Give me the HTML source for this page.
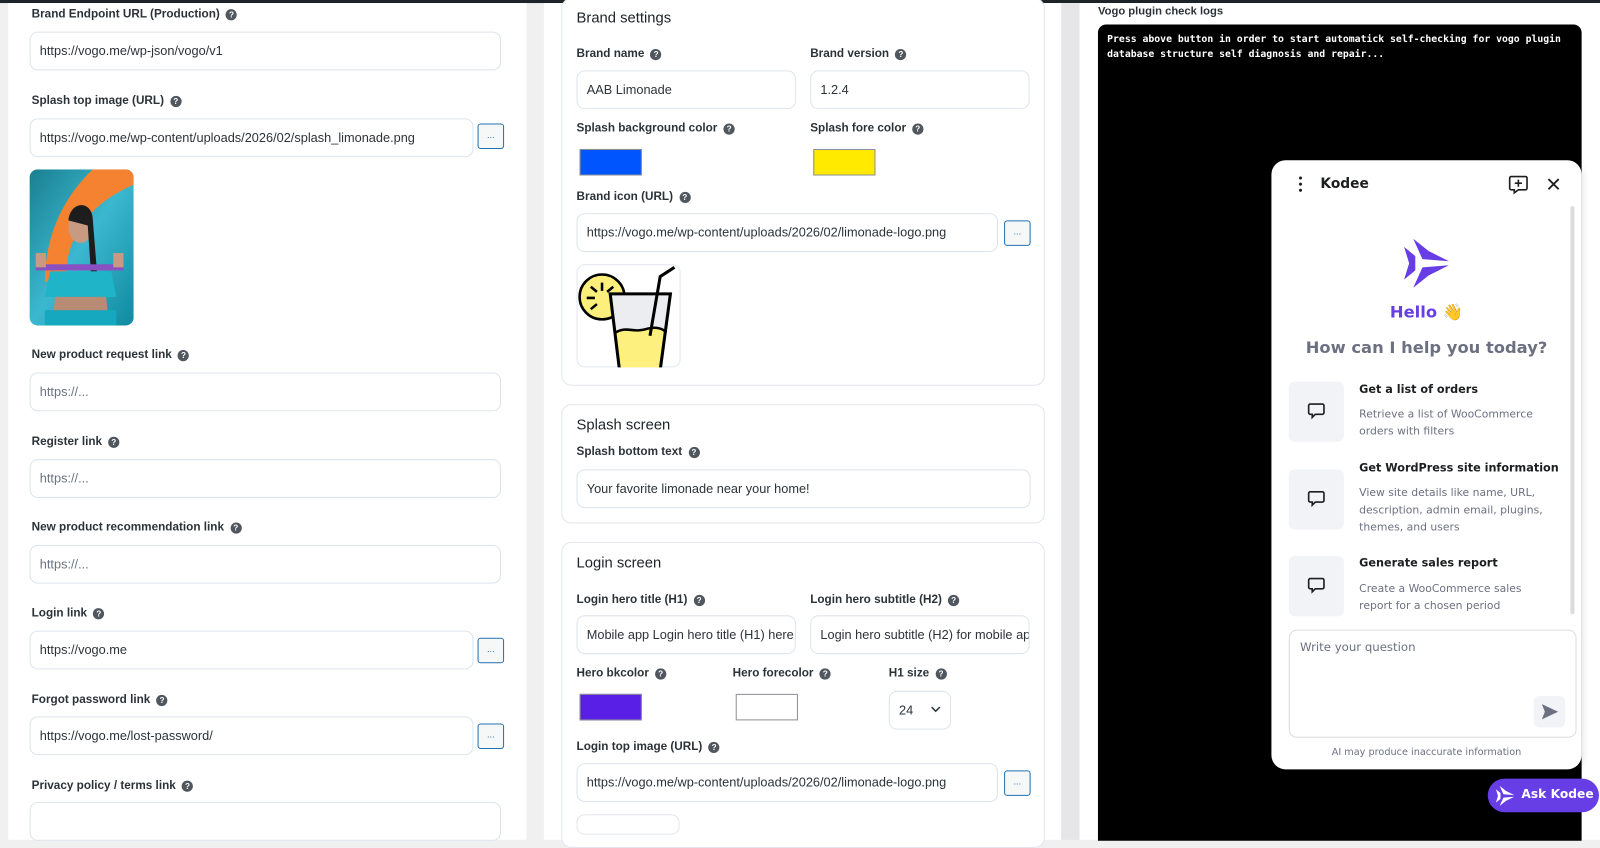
<!DOCTYPE html>
<html><head><meta charset="utf-8">
<style>
*{box-sizing:border-box;margin:0;padding:0}
html,body{width:1600px;height:818px;overflow:hidden;background:#f0f0f1;font-family:"Liberation Sans",sans-serif}
#s{position:absolute;left:0;top:0;width:1568px;height:802px;transform:scale(1.0204);transform-origin:0 0}
.a{position:absolute}
.lbl{position:absolute;font-size:11.5px;font-weight:bold;color:#2c3338;white-space:nowrap;line-height:14px}
.q{display:inline-block;width:11px;height:11px;border-radius:50%;background:#50575e;color:#fff;font-size:8px;text-align:center;line-height:11px;margin-left:6px;vertical-align:0px}
.in{position:absolute;height:38px;border:1px solid #dde3ec;border-radius:8px;background:#fff;font-size:12.5px;color:#2c3338;padding-left:9px;line-height:36px;white-space:nowrap;overflow:hidden}
.ph{color:#6b7280}
.btn{position:absolute;width:26px;height:25px;border:1px solid #2271b1;border-radius:3px;background:#f6f7f7;font-size:9px;color:#2271b1;text-align:center;line-height:20px}
.card{position:absolute;left:550px;width:474px;border:1px solid #e2e6ec;border-radius:10px;background:#fff}
.ttl{position:absolute;font-size:14.5px;color:#1d2327}
.sw{position:absolute;width:61px;height:26px;border:1px solid #8c8f94}
.kt{position:absolute;left:1332px;font-family:"DejaVu Sans",sans-serif;font-size:11px;font-weight:bold;color:#1d1e20;white-space:nowrap}
.kd{position:absolute;left:1332px;font-family:"DejaVu Sans",sans-serif;font-size:10.6px;color:#6d7081;line-height:17px;width:185px}
.ib{position:absolute;left:1263px;width:54px;height:59px;background:#f2f3f6;border-radius:6px}
.ib svg{position:absolute;left:18px;top:20px}
</style></head><body>
<div id="s">
<div class="a" style="left:0;top:0;width:1568px;height:3px;background:#1d2327"></div>
<div class="a" style="left:8px;top:3px;width:508px;height:820px;background:#fff"></div>
<div class="lbl" style="left:31px;top:7px">Brand Endpoint URL (Production)<span class="q">?</span></div>
<div class="in" style="left:29px;top:31px;width:462px">https://vogo.me/wp-json/vogo/v1</div>
<div class="lbl" style="left:31px;top:92px">Splash top image (URL)<span class="q">?</span></div>
<div class="in" style="left:29px;top:116px;width:435px">https://vogo.me/wp-content/uploads/2026/02/splash_limonade.png</div>
<div class="btn" style="left:468px;top:121px">...</div>
<svg class="a" style="left:29px;top:166px" width="102" height="153" viewBox="0 0 102 153">
<defs><linearGradient id="g" x1="0" y1="0" x2="1" y2="1"><stop offset="0" stop-color="#1a7f90"/><stop offset=".5" stop-color="#3bb8d0"/><stop offset="1" stop-color="#0f8aa0"/></linearGradient><clipPath id="c"><rect width="102" height="153" rx="8"/></clipPath></defs>
<g clip-path="url(#c)"><rect width="102" height="153" fill="url(#g)"/>
<path d="M62 0 C30 30 15 70 15 110 L35 110 C35 70 55 35 102 15 L102 0Z" fill="#f58231"/>
<ellipse cx="50" cy="57" rx="12" ry="15" fill="#c99a82"/><path d="M38 50 C40 30 62 30 62 50 L66 100 L60 100 L57 55Z" fill="#1d1d1d"/>
<rect x="6" y="93" width="86" height="6" fill="#8a4fc0"/>
<rect x="6" y="82" width="10" height="14" fill="#c99a82"/><rect x="82" y="82" width="10" height="14" fill="#c99a82"/>
<path d="M20 100 L80 100 L85 125 L15 125Z" fill="#1fb4c8"/><path d="M25 125 L75 125 L78 153 L22 153Z" fill="#b98a74"/><rect x="15" y="138" width="70" height="15" fill="#16a8be"/></g></svg>
<div class="lbl" style="left:31px;top:341px">New product request link<span class="q">?</span></div>
<div class="in ph" style="left:29px;top:365px;width:462px">https://...</div>
<div class="lbl" style="left:31px;top:426px">Register link<span class="q">?</span></div>
<div class="in ph" style="left:29px;top:450px;width:462px">https://...</div>
<div class="lbl" style="left:31px;top:510px">New product recommendation link<span class="q">?</span></div>
<div class="in ph" style="left:29px;top:534px;width:462px">https://...</div>
<div class="lbl" style="left:31px;top:594px">Login link<span class="q">?</span></div>
<div class="in" style="left:29px;top:618px;width:435px">https://vogo.me</div>
<div class="btn" style="left:468px;top:625px">...</div>
<div class="lbl" style="left:31px;top:679px">Forgot password link<span class="q">?</span></div>
<div class="in" style="left:29px;top:702px;width:435px">https://vogo.me/lost-password/</div>
<div class="btn" style="left:468px;top:709px">...</div>
<div class="lbl" style="left:31px;top:763px">Privacy policy / terms link<span class="q">?</span></div>
<div class="in" style="left:29px;top:786px;width:462px"></div>
<div class="a" style="left:533px;top:3px;width:507px;height:820px;background:#fff"></div>
<div class="card" style="top:-2px;height:380px"></div>
<div class="ttl" style="left:565px;top:10px">Brand settings</div>
<div class="lbl" style="left:565px;top:46px">Brand name<span class="q">?</span></div>
<div class="lbl" style="left:794px;top:46px">Brand version<span class="q">?</span></div>
<div class="in" style="left:565px;top:69px;width:215px">AAB Limonade</div>
<div class="in" style="left:794px;top:69px;width:215px">1.2.4</div>
<div class="lbl" style="left:565px;top:119px">Splash background color<span class="q">?</span></div>
<div class="lbl" style="left:794px;top:119px">Splash fore color<span class="q">?</span></div>
<div class="sw" style="left:568px;top:146px;background:#0055ff"></div>
<div class="sw" style="left:797px;top:146px;background:#ffea00"></div>
<div class="lbl" style="left:565px;top:186px">Brand icon (URL)<span class="q">?</span></div>
<div class="in" style="left:565px;top:209px;width:413px">https://vogo.me/wp-content/uploads/2026/02/limonade-logo.png</div>
<div class="btn" style="left:984px;top:216px">...</div>
<div class="a" style="left:565px;top:259px;width:102px;height:101px;border:1px solid #e2e6ec;border-radius:8px"></div>
<svg class="a" style="left:565px;top:259px" width="102" height="101" viewBox="0 0 102 101">
<circle cx="25" cy="32" r="22" fill="#fcef7c" stroke="#000" stroke-width="2.5"/>
<g stroke="#000" stroke-width="2.5"><path d="M25 18v8M14 22l6 5M36 22l-6 5M10 33h8M14 44l6-5"/></g>
<path d="M33 29 L92 29 L80 110 L43 110Z" fill="#ebedf0"/>
<path d="M38 65 C50 60 55 68 70 63 C78 61 85 63 88 67 L80 112 L43 112Z" fill="#fdf07e"/>
<path d="M33 29 L92 29 L81 111 L43 111Z" fill="none" stroke="#000" stroke-width="3"/>
<path d="M38 67 C50 60 55 68 70 63 C78 61 85 63 88 67" fill="none" stroke="#000" stroke-width="2.5"/>
<path d="M72 70 L82 12 L96 3" fill="none" stroke="#000" stroke-width="3"/>
</svg>
<div class="card" style="top:396px;height:117px"></div>
<div class="ttl" style="left:565px;top:409px">Splash screen</div>
<div class="lbl" style="left:565px;top:436px">Splash bottom text<span class="q">?</span></div>
<div class="in" style="left:565px;top:460px;width:445px">Your favorite limonade near your home!</div>
<div class="card" style="top:531px;height:300px"></div>
<div class="ttl" style="left:565px;top:544px">Login screen</div>
<div class="lbl" style="left:565px;top:581px">Login hero title (H1)<span class="q">?</span></div>
<div class="lbl" style="left:794px;top:581px">Login hero subtitle (H2)<span class="q">?</span></div>
<div class="in" style="left:565px;top:603px;width:215px">Mobile app Login hero title (H1) here</div>
<div class="in" style="left:794px;top:603px;width:215px">Login hero subtitle (H2) for mobile app</div>
<div class="lbl" style="left:565px;top:653px">Hero bkcolor<span class="q">?</span></div>
<div class="lbl" style="left:718px;top:653px">Hero forecolor<span class="q">?</span></div>
<div class="lbl" style="left:871px;top:653px">H1 size<span class="q">?</span></div>
<div class="sw" style="left:568px;top:680px;background:#5a1fe6"></div>
<div class="sw" style="left:721px;top:680px;background:#fff"></div>
<div class="in" style="left:871px;top:677px;width:61px">24</div>
<svg class="a" style="left:912px;top:692px" width="10" height="7"><path d="M1 1l4 4 4-4" fill="none" stroke="#2c3338" stroke-width="1.5"/></svg>
<div class="lbl" style="left:565px;top:725px">Login top image (URL)<span class="q">?</span></div>
<div class="in" style="left:565px;top:748px;width:413px">https://vogo.me/wp-content/uploads/2026/02/limonade-logo.png</div>
<div class="btn" style="left:984px;top:755px">...</div>
<div class="a" style="left:565px;top:798px;width:101px;height:20px;border:1px solid #e2e6ec;border-radius:8px"></div>
<div class="a" style="left:1040px;top:3px;width:18px;height:820px;background:#e6e6e8"></div>
<div class="a" style="left:1058px;top:3px;width:510px;height:820px;background:#fff"></div>
<div class="lbl" style="left:1076px;top:4px;font-size:11px">Vogo plugin check logs</div>
<div class="a" style="left:1076px;top:24px;width:474px;height:800px;background:#000;border-radius:8px 8px 0 0"></div>
<div class="a" style="left:1085px;top:31px;font-family:'DejaVu Sans Mono','Liberation Mono',monospace;font-size:9.6px;font-weight:bold;color:#fff;line-height:15px;white-space:pre">Press above button in order to start automatick self-checking for vogo plugin
database structure self diagnosis and repair...</div>
<div class="a" style="left:1246px;top:157px;width:304px;height:597px;background:#fff;border-radius:14px;box-shadow:0 2px 8px rgba(0,0,0,.15)"></div>
<div class="a" style="left:1273px;top:173px;width:3px;height:3px;border-radius:50%;background:#1d1e20;box-shadow:0 6px 0 #1d1e20,0 12px 0 #1d1e20"></div>
<div class="a" style="left:1294px;top:172px;font-family:'DejaVu Sans',sans-serif;font-size:13.5px;font-weight:bold;color:#1d1e20">Kodee</div>
<svg class="a" style="left:1478px;top:171px" width="20" height="20" viewBox="0 0 20 20"><path d="M3 2h14a1.5 1.5 0 0 1 1.5 1.5v10a1.5 1.5 0 0 1-1.5 1.5H10l-4 3v-3H3a1.5 1.5 0 0 1-1.5-1.5v-10A1.5 1.5 0 0 1 3 2z" fill="none" stroke="#1d1e20" stroke-width="1.6"/><path d="M10 5v7M6.5 8.5h7" stroke="#1d1e20" stroke-width="1.6"/></svg>
<svg class="a" style="left:1516px;top:174px" width="13" height="13"><path d="M1.5 1.5l10 10M11.5 1.5l-10 10" stroke="#1d1e20" stroke-width="1.8"/></svg>
<div class="a" style="left:1539px;top:202px;width:4px;height:400px;background:#dcdce0;border-radius:2px"></div>
<svg class="a" style="left:1376px;top:234px" width="44" height="48" viewBox="0 0 44 48"><g fill="#673de6"><path d="M0 8 L11 17 L11 31 L0 40 L5 24Z"/><path d="M9 0 L24 12 L44 22 L18 20Z"/><path d="M18 28 L44 26 L24 36 L9 48Z"/></g></svg>
<div class="a" style="left:1246px;top:296px;width:304px;text-align:center;font-family:'DejaVu Sans',sans-serif;font-size:16px;font-weight:bold;color:#673de6">Hello 👋</div>
<div class="a" style="left:1246px;top:331px;width:304px;text-align:center;font-family:'DejaVu Sans',sans-serif;font-size:16px;font-weight:bold;color:#6d7081">How can I help you today?</div>
<div class="ib" style="top:374px"><svg width="18" height="18" viewBox="0 0 18 18"><path d="M3 2h12a1.5 1.5 0 0 1 1.5 1.5v7A1.5 1.5 0 0 1 15 12H8l-3 3v-3H3a1.5 1.5 0 0 1-1.5-1.5v-7A1.5 1.5 0 0 1 3 2z" fill="none" stroke="#1d1e20" stroke-width="1.6"/></svg></div>
<div class="kt" style="top:375px">Get a list of orders</div>
<div class="kd" style="top:398px">Retrieve a list of WooCommerce orders with filters</div>
<div class="ib" style="top:460px"><svg width="18" height="18" viewBox="0 0 18 18"><path d="M3 2h12a1.5 1.5 0 0 1 1.5 1.5v7A1.5 1.5 0 0 1 15 12H8l-3 3v-3H3a1.5 1.5 0 0 1-1.5-1.5v-7A1.5 1.5 0 0 1 3 2z" fill="none" stroke="#1d1e20" stroke-width="1.6"/></svg></div>
<div class="kt" style="top:452px">Get WordPress site information</div>
<div class="kd" style="top:475px">View site details like name, URL, description, admin email, plugins, themes, and users</div>
<div class="ib" style="top:545px"><svg width="18" height="18" viewBox="0 0 18 18"><path d="M3 2h12a1.5 1.5 0 0 1 1.5 1.5v7A1.5 1.5 0 0 1 15 12H8l-3 3v-3H3a1.5 1.5 0 0 1-1.5-1.5v-7A1.5 1.5 0 0 1 3 2z" fill="none" stroke="#1d1e20" stroke-width="1.6"/></svg></div>
<div class="kt" style="top:545px">Generate sales report</div>
<div class="kd" style="top:569px;width:170px">Create a WooCommerce sales report for a chosen period</div>
<div class="a" style="left:1263px;top:617px;width:282px;height:106px;border:1px solid #dadce0;border-radius:8px;background:#fff"></div>
<div class="a" style="left:1274px;top:627px;font-family:'DejaVu Sans',sans-serif;font-size:11.5px;color:#6d7081">Write your question</div>
<div class="a" style="left:1503px;top:682px;width:31px;height:31px;border-radius:6px;background:#f2f3f6"></div>
<svg class="a" style="left:1510px;top:689px" width="18" height="17" viewBox="0 0 18 17"><path d="M1 1 L17 8.5 L1 16 L4 8.5Z" fill="#6d7081"/></svg>
<div class="a" style="left:1246px;top:732px;width:304px;text-align:center;font-family:'DejaVu Sans',sans-serif;font-size:9.5px;color:#6d7081">AI may produce inaccurate information</div>
<div class="a" style="left:1458px;top:763px;width:109px;height:33px;border-radius:17px;background:#673de6"></div>
<svg class="a" style="left:1466px;top:770px" width="18" height="20" viewBox="0 0 44 48"><g fill="#fff"><path d="M0 8 L11 17 L11 31 L0 40 L5 24Z"/><path d="M9 0 L24 12 L44 22 L18 20Z"/><path d="M18 28 L44 26 L24 36 L9 48Z"/></g></svg>
<div class="a" style="left:1491px;top:771px;font-family:'DejaVu Sans',sans-serif;font-size:12px;font-weight:bold;color:#fff">Ask Kodee</div>
</div>
</body></html>
